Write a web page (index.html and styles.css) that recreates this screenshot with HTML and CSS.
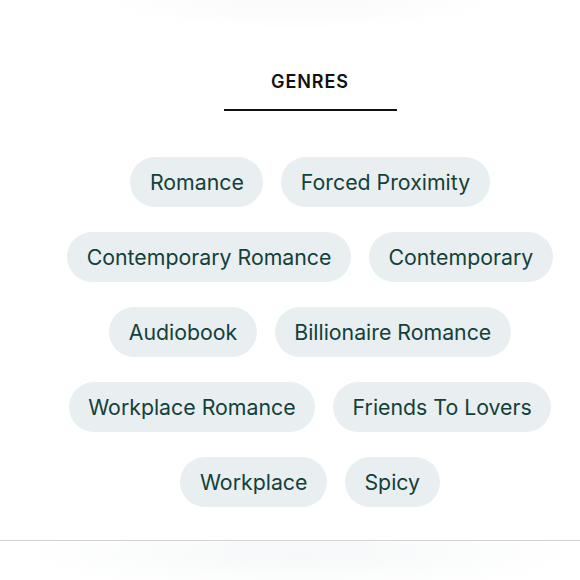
FILE: index.html
```html
<!DOCTYPE html>
<html>
<head>
<meta charset="utf-8">
<link rel="stylesheet" href="styles.css">
</head>
<body>
<div class="page">
  <div class="top-shade"></div>
  <section class="genres">
    <h2 class="title">GENRES</h2>
    <div class="rule"></div>
    <ul class="tags">
      <li class="tag">Romance</li>
      <li class="tag">Forced Proximity</li>
      <li class="tag">Contemporary Romance</li>
      <li class="tag">Contemporary</li>
      <li class="tag">Audiobook</li>
      <li class="tag">Billionaire Romance</li>
      <li class="tag">Workplace Romance</li>
      <li class="tag">Friends To Lovers</li>
      <li class="tag">Workplace</li>
      <li class="tag">Spicy</li>
    </ul>
  </section>
  <div class="bottom-bar"></div>
</div>
</body>
</html>
```
FILE: styles.css
```css
html, body {
  margin: 0;
  padding: 0;
  background: #ffffff;
}
.page {
  width: 580px;
  height: 580px;
  overflow: hidden;
  font-family: Inter, "Noto Sans", sans-serif;
  display: flex;
  flex-direction: column;
}
.top-shade {
  height: 36px;
  background: radial-gradient(ellipse 200px 30px at 300px 0px, #fafafa 0%, #fcfcfc 50%, #ffffff 100%);
}
.genres {
  width: 540px;
  margin-left: 40px;
  display: flex;
  flex-direction: column;
  align-items: center;
}
.title {
  margin: 36px 0 0 0;
  font-size: 18px;
  font-weight: 600;
  letter-spacing: 0.9px;
  color: #111111;
  line-height: 20px;
}
.rule {
  width: 173px;
  height: 2px;
  background: #111111;
  margin-top: 17px;
}
.tags {
  list-style: none;
  margin: 46px 0 0 0;
  padding: 0;
  display: flex;
  flex-wrap: wrap;
  justify-content: center;
  column-gap: 18px;
  row-gap: 25px;
}
.tag {
  height: 50px;
  padding: 0 19.5px;
  border-radius: 25px;
  background: #e9eef0;
  color: #12413a;
  font-size: 21.3px;
  line-height: 51px;
  white-space: nowrap;
}
.bottom-bar {
  margin-top: 33px;
  height: 40px;
  border-top: 1.5px solid #d2d2d2;
  background: radial-gradient(ellipse 280px 40px at 300px 12px, #f6f8f9 0%, #fbfcfc 60%, #ffffff 100%);
}
```
